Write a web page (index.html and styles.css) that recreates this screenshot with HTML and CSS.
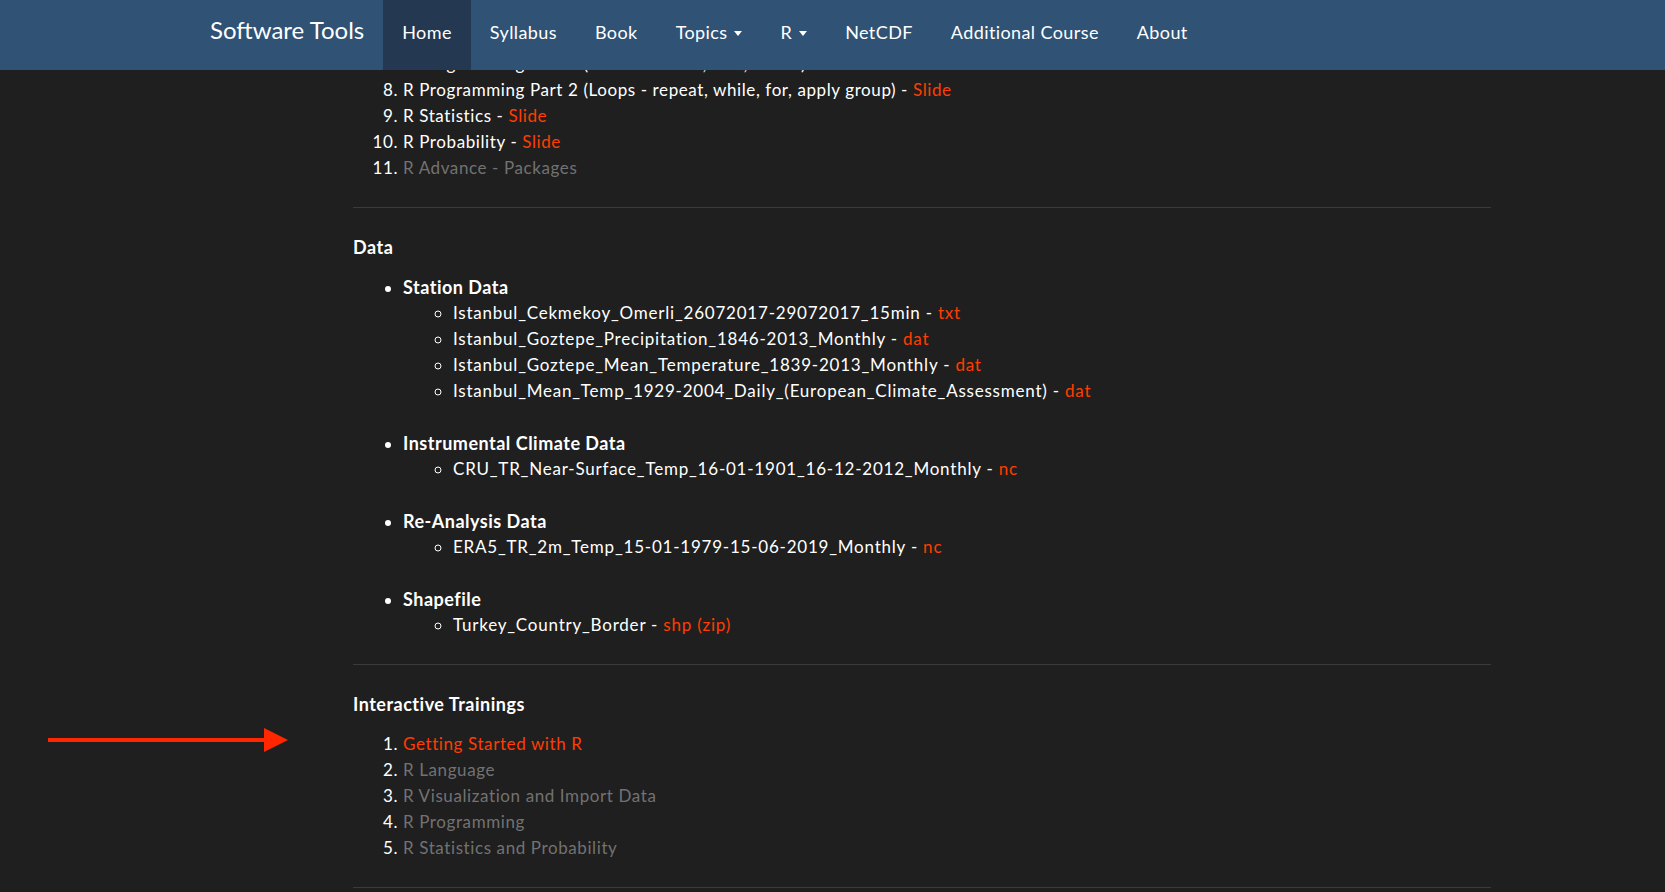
FILE: index.html
```html
<!DOCTYPE html>
<html lang="en">
<head>
<meta charset="utf-8">
<title>Software Tools</title>
<link rel="stylesheet" href="styles.css">
</head>
<body>
<header class="navbar">
  <div class="nav-inner">
    <a class="brand" href="#">Software Tools</a>
    <ul class="nav">
      <li class="active"><a href="#">Home</a></li>
      <li><a href="#">Syllabus</a></li>
      <li><a href="#">Book</a></li>
      <li><a href="#">Topics<span class="caret"></span></a></li>
      <li><a href="#">R<span class="caret"></span></a></li>
      <li><a href="#">NetCDF</a></li>
      <li><a href="#">Additional Course</a></li>
      <li><a href="#">About</a></li>
    </ul>
  </div>
</header>

<main class="main">
  <ol class="num-list" start="7">
    <li>R Programming Part 1 (Conditions - if, else, else if) - <a href="#">Slide</a></li>
    <li>R Programming Part 2 (Loops - repeat, while, for, apply group) - <a href="#">Slide</a></li>
    <li>R Statistics - <a href="#">Slide</a></li>
    <li>R Probability - <a href="#">Slide</a></li>
    <li><span class="muted">R Advance - Packages</span></li>
  </ol>

  <hr class="rule">

  <h4 class="section-title">Data</h4>
  <ul class="data-list">
    <li><strong class="group-title">Station Data</strong>
      <ul class="sub-list">
        <li>Istanbul_Cekmekoy_Omerli_26072017-29072017_15min - <a href="#">txt</a></li>
        <li>Istanbul_Goztepe_Precipitation_1846-2013_Monthly - <a href="#">dat</a></li>
        <li>Istanbul_Goztepe_Mean_Temperature_1839-2013_Monthly - <a href="#">dat</a></li>
        <li>Istanbul_Mean_Temp_1929-2004_Daily_(European_Climate_Assessment) - <a href="#">dat</a></li>
      </ul>
    </li>
    <li><strong class="group-title">Instrumental Climate Data</strong>
      <ul class="sub-list">
        <li>CRU_TR_Near-Surface_Temp_16-01-1901_16-12-2012_Monthly - <a href="#">nc</a></li>
      </ul>
    </li>
    <li><strong class="group-title">Re-Analysis Data</strong>
      <ul class="sub-list">
        <li>ERA5_TR_2m_Temp_15-01-1979-15-06-2019_Monthly - <a href="#">nc</a></li>
      </ul>
    </li>
    <li><strong class="group-title">Shapefile</strong>
      <ul class="sub-list">
        <li>Turkey_Country_Border - <a href="#">shp (zip)</a></li>
      </ul>
    </li>
  </ul>

  <hr class="rule">

  <h4 class="section-title">Interactive Trainings</h4>
  <ol class="num-list">
    <li><a href="#">Getting Started with R</a></li>
    <li><span class="muted">R Language</span></li>
    <li><span class="muted">R Visualization and Import Data</span></li>
    <li><span class="muted">R Programming</span></li>
    <li><span class="muted">R Statistics and Probability</span></li>
  </ol>

  <hr class="rule">
</main>

<svg class="arrow" width="240" height="24" viewBox="0 0 240 24" aria-hidden="true">
  <rect x="0" y="10" width="220" height="4" fill="#ff2600"/>
  <polygon points="216,0 240,12 216,24" fill="#ff2600"/>
</svg>
</body>
</html>
```

FILE: styles.css
```css
html, body {
  margin: 0;
  padding: 0;
}

body {
  background: #1f1f1f;
  color: #ffffff;
  font-family: Lato, "Open Sans", "Liberation Sans", sans-serif;
  font-size: 17px;
  line-height: 26px;
  letter-spacing: 0.6px;
  min-height: 892px;
}

a {
  color: #ff3d00;
  text-decoration: none;
}

/* Navbar */
.navbar {
  position: fixed;
  top: 0;
  left: 0;
  right: 0;
  height: 70px;
  background: #2f5275;
  z-index: 10;
}

.nav-inner {
  display: flex;
  align-items: flex-start;
  height: 70px;
  padding-left: 210px;
}

.brand {
  color: #ffffff;
  font-size: 24px;
  line-height: 24px;
  letter-spacing: 0;
  padding: 18px 19px 28px 0;
}

.nav {
  display: flex;
  list-style: none;
  margin: 0;
  padding: 0;
  height: 70px;
}

.nav li a {
  display: block;
  color: #ffffff;
  font-size: 18px;
  line-height: 20px;
  letter-spacing: 0.4px;
  padding: 22px 19px 28px;
}

.nav li.active a {
  background: #243852;
}

.caret {
  display: inline-block;
  width: 0;
  height: 0;
  margin-left: 7px;
  vertical-align: 3px;
  border-top: 5px solid #ffffff;
  border-left: 4.5px solid transparent;
  border-right: 4.5px solid transparent;
}

/* Main content */
.main {
  padding: 51px 174px 0 353px;
}

.num-list,
.data-list {
  margin: 0;
  padding-left: 50px;
}

.sub-list {
  margin: 0;
  padding-left: 50px;
  list-style-type: circle;
  letter-spacing: 0.78px;
}

.data-list > li:not(:last-child) {
  margin-bottom: 26px;
}

.group-title {
  display: block;
  height: 26px;
  font-weight: 700;
  font-size: 18px;
  line-height: 26px;
  letter-spacing: 0.5px;
}

.muted {
  color: #727272;
}

.rule {
  margin: 26px 0;
  border: 0;
  border-top: 1px solid #3a3a3a;
  height: 0;
}

.section-title {
  margin: 0 0 14px;
  font-size: 18px;
  line-height: 26px;
  letter-spacing: 0.5px;
  font-weight: 700;
}

/* Annotation arrow over the page */
.arrow {
  position: absolute;
  left: 48px;
  top: 728px;
}
```
